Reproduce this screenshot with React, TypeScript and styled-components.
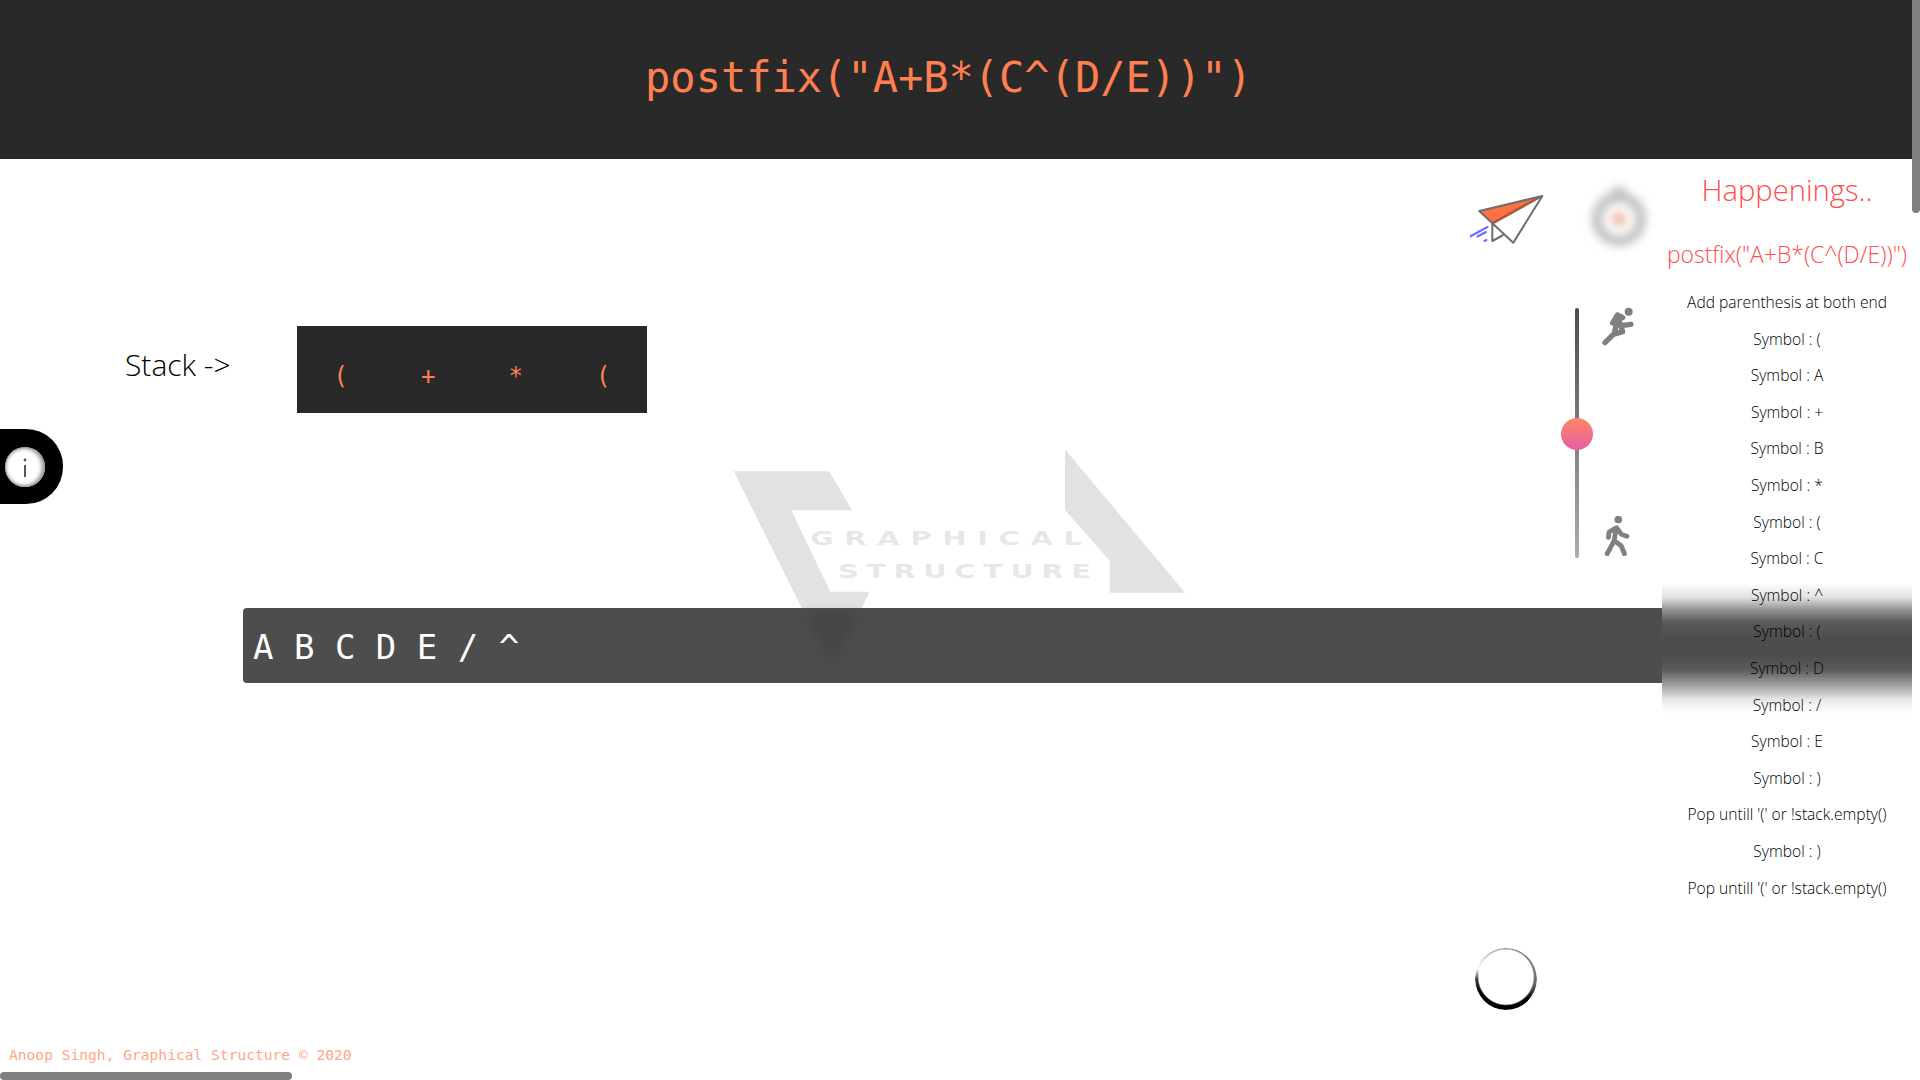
import React from 'react';
import styled, { createGlobalStyle } from 'styled-components';

const Global = createGlobalStyle`
  html, body { margin: 0; padding: 0; background: #fff; overflow: hidden; }
  * { box-sizing: border-box; }
`;

const Frame = styled.div`
  position: relative;
  width: 1920px;
  height: 1080px;
  padding-right: 8px;
  overflow: hidden;
  display: flex;
  flex-direction: column;
  background: #fff;
`;

const Header = styled.header`
  flex: 0 0 159px;
  height: 159px;
  background: #292929;
  color: #ff7f50;
  font: 400 42px/155px 'DejaVu Sans Mono', monospace;
  text-align: center;
  padding-right: 15px;
`;

const Body = styled.div`
  flex: 1;
  display: flex;
  min-height: 0;
`;

const Workspace = styled.main`
  flex: 1;
  min-width: 0;
  display: flex;
  flex-direction: column;
`;

const TopRow = styled.div`
  flex: 0 0 449px;
  display: flex;
  justify-content: space-between;
  align-items: flex-start;
`;

const StackRow = styled.section`
  display: flex;
  align-items: flex-start;
  margin: 167px 0 0 125px;
`;

const StackLabel = styled.div`
  width: 172px;
  font: 300 30px/77px 'Open Sans', sans-serif;
  color: #000;
`;

const StackBox = styled.div`
  display: flex;
  width: 350px;
  height: 87px;
  background: #292929;
`;

const StackItem = styled.span`
  flex: 1;
  text-align: center;
  color: #ff7f50;
  font: 400 24px/100px 'DejaVu Sans Mono', monospace;
`;

const Controls = styled.aside`
  width: 192px;
  padding-top: 31px;
  display: flex;
  flex-direction: column;
`;

const ControlTop = styled.div`
  display: flex;
  align-items: center;
  height: 62px;
`;

const Plane = styled.svg`
  width: 78px;
  height: 60px;
  flex: none;
`;

const Timer = styled.svg`
  width: 70px;
  height: 70px;
  margin: -8px 0 0 36px;
  flex: none;
  filter: blur(5px);
`;

const SpeedRow = styled.div`
  display: flex;
  margin-top: 56px;
  height: 250px;
  margin-left: 105px;
`;

const Track = styled.div`
  position: relative;
  width: 4px;
  height: 250px;
  border-radius: 2px;
  background: linear-gradient(to bottom, #4d4d4d, #adadad);
`;

const Thumb = styled.div`
  position: absolute;
  left: -14px;
  top: 110px;
  width: 32px;
  height: 32px;
  border-radius: 50%;
  background: linear-gradient(to bottom, #ff8566, #e55fa5);
`;

const SpeedIcons = styled.div`
  display: flex;
  flex-direction: column;
  justify-content: space-between;
  margin: -2px 0 0 22px;
  height: 250px;
`;

const SpeedIcon = styled.svg`
  display: block;
  width: 35px;
  height: 40px;
`;

const OutputBar = styled.div`
  flex: 0 0 75px;
  height: 75px;
  min-height: 0;
  margin-left: 243px;
  padding-left: 10px;
  border-radius: 4px 0 0 4px;
  background: #4d4d4d;
  color: #fff;
  font: 400 34px/78px 'DejaVu Sans Mono', monospace;
  white-space: pre;
  overflow: hidden;
`;

const BottomRow = styled.div`
  flex: 1;
  display: flex;
  flex-direction: column;
`;

const SpinnerSlot = styled.div`
  height: 327px;
  padding: 265px 0 0 1475px;
`;

const Spinner = styled.div`
  width: 62px;
  height: 62px;
  border-radius: 50%;
  background: conic-gradient(
    #8a8a8a 0deg,
    #7c7c7c 70deg,
    #666 100deg,
    #000 135deg,
    #000 240deg,
    #333 268deg,
    #fff 290deg,
    #cfcfcf 315deg,
    #8a8a8a 360deg
  );
  mask: radial-gradient(circle at 50% 47%, transparent 27px, #000 28.5px);
  filter: blur(0.5px);
`;

const Footer = styled.footer`
  margin: 35px 0 0 9px;
  color: #ffa588;
  font: 400 14.6px/20px 'DejaVu Sans Mono', monospace;
`;

const Panel = styled.aside`
  flex: 0 0 250px;
  width: 250px;
  position: relative;
  z-index: 3;
  text-align: center;
  background: linear-gradient(
    to bottom,
    #fff 0,
    #fff 424px,
    #e2e2e2 438px,
    #939393 451px,
    #5a5a5a 463px,
    #4d4d4d 480px,
    #4d4d4d 497px,
    #5c5c5c 511px,
    #a0a0a0 526px,
    #e4e4e4 540px,
    #f8f8f8 548px,
    #fff 555px,
    #fff 100%
  );
`;

const PanelTitle = styled.h2`
  margin: 9px 0 0;
  color: #ff4d4d;
  font: 300 29.2px/44px 'Open Sans', sans-serif;
`;

const PanelCode = styled.h3`
  margin: 23px 0 9px;
  color: #ff4d4d;
  font: 300 22.9px/40px 'Open Sans', sans-serif;
  white-space: nowrap;
`;

const LogLine = styled.div`
  color: #000;
  font: 300 15.6px/36.6px 'Open Sans', sans-serif;
  white-space: nowrap;
`;

const Watermark = styled.svg`
  position: absolute;
  left: 0;
  top: 0;
  width: 1920px;
  height: 1080px;
  z-index: 2;
  pointer-events: none;
`;

const InfoTab = styled.div`
  position: absolute;
  left: 0;
  top: 429px;
  width: 63px;
  height: 75px;
  padding-left: 5px;
  display: flex;
  align-items: center;
  background: #000;
  border-radius: 0 37px 37px 0;
  z-index: 4;
`;

const InfoDisc = styled.div`
  width: 40px;
  height: 40px;
  border-radius: 50%;
  background: #fff;
  box-shadow: inset -3px 0 4px #9a9aa5, inset 0 0 4px #555;
  display: flex;
  align-items: center;
  justify-content: center;
`;

const VThumb = styled.div`
  position: absolute;
  top: 0;
  right: 0;
  width: 8px;
  height: 213px;
  border-radius: 0 0 4px 4px;
  background: #808080;
  z-index: 5;
`;

const HThumb = styled.div`
  position: absolute;
  left: 0;
  bottom: 0;
  width: 292px;
  height: 8px;
  border-radius: 4px;
  background: #808080;
  z-index: 5;
`;

const LOG = [
  'Add parenthesis at both end',
  'Symbol : (', 'Symbol : A', 'Symbol : +', 'Symbol : B', 'Symbol : *', 'Symbol : (',
  'Symbol : C', 'Symbol : ^', 'Symbol : (', 'Symbol : D', 'Symbol : /', 'Symbol : E',
  'Symbol : )', "Pop untill '(' or !stack.empty()", 'Symbol : )', "Pop untill '(' or !stack.empty()",
];

const STACK = ['(', '+', '*', '('];

export default function App() {
  return (
    <Frame>
      <Global />
      <Header>postfix("A+B*(C^(D/E))")</Header>
      <Body>
        <Workspace>
          <TopRow>
            <StackRow>
              <StackLabel>Stack -&gt;</StackLabel>
              <StackBox>
                {STACK.map((s, i) => <StackItem key={i}>{s}</StackItem>)}
              </StackBox>
            </StackRow>
            <Controls>
              <ControlTop>
                <Plane viewBox="1470 190 78 60">
                  <polygon points="1479.3,210 1542.3,195 1492.3,222.3" fill="#ff7043" />
                  <polyline points="1492.3,222.3 1540,196" fill="none" stroke="#a8583c" strokeWidth="2.5" />
                  <path d="M1492.3 222.3 L1479.3 210 L1542.3 195 L1513.3 241.7 L1492.3 222.3 V240 L1503.3 234" fill="none" stroke="#6e6e6e" strokeWidth="2" strokeLinejoin="round" />
                  <path d="M1470 235.5 L1487.5 226 M1477.5 235.5 L1486 231 M1484.5 240 L1486.5 239" stroke="#6e6bff" strokeWidth="2" strokeLinecap="round" fill="none" />
                </Plane>
                <Timer viewBox="0 0 70 70">
                  <circle cx="35" cy="37" r="22" fill="none" stroke="#bdbdbd" strokeWidth="10" />
                  <rect x="29" y="5" width="12" height="9" fill="#bdbdbd" />
                  <circle cx="35" cy="37" r="7" fill="#e8b098" />
                </Timer>
              </ControlTop>
              <SpeedRow>
                <Track><Thumb /></Track>
                <SpeedIcons>
                  <SpeedIcon viewBox="185 45 105 120">
                    <circle cx="268" cy="62" r="12" fill="#808080" />
                    <path d="M197 155 L222 130 L250 122 L244 104 L275 100 M244 104 L234 72 L220 96 M234 72 L250 80 M236 78 L224 130" fill="none" stroke="#808080" strokeWidth="16" strokeLinecap="round" strokeLinejoin="round" />
                  </SpeedIcon>
                  <SpeedIcon viewBox="185 675 105 125">
                    <circle cx="237" cy="686" r="12" fill="#808080" />
                    <path d="M202 793 L224 752 L230 712 L208 725 L206 742 M232 712 L246 732 L264 738 M224 752 L246 768 L256 793" fill="none" stroke="#808080" strokeWidth="15" strokeLinecap="round" strokeLinejoin="round" />
                  </SpeedIcon>
                </SpeedIcons>
              </SpeedRow>
            </Controls>
          </TopRow>
          <OutputBar>A B C D E / ^</OutputBar>
          <BottomRow>
            <SpinnerSlot><Spinner /></SpinnerSlot>
            <Footer>Anoop Singh, Graphical Structure © 2020</Footer>
          </BottomRow>
        </Workspace>
        <Panel>
          <PanelTitle>Happenings..</PanelTitle>
          <PanelCode>postfix("A+B*(C^(D/E))")</PanelCode>
          {LOG.map((l, i) => <LogLine key={i}>{l}</LogLine>)}
        </Panel>
      </Body>
      <Watermark viewBox="0 0 1920 1080">
        <defs>
          <filter id="soft" x="-40%" y="-40%" width="180%" height="180%">
            <feGaussianBlur stdDeviation="7" />
          </filter>
        </defs>
        <g fill="#000" fillOpacity="0.115">
          <polygon points="733.7,471.3 829.3,471.3 852,510.3 791.3,510.3 830.3,591.7 869.7,591.7 861.7,608 801.7,608" />
          <polygon points="1065,449.3 1185,592.7 1109.7,592.7 1109.7,560.7 1065,510" />
          <polygon points="804,612 860,612 832,664" filter="url(#soft)" />
        </g>
        <g fill="#000" fillOpacity="0.115" fontFamily="'DejaVu Sans', sans-serif" fontWeight="700" fontSize="20">
          <text x="558.6" y="545" transform="scale(1.45 1)" textLength="187.6" lengthAdjust="spacing">GRAPHICAL</text>
          <text x="577.9" y="578" transform="scale(1.45 1)" textLength="174.5" lengthAdjust="spacing">STRUCTURE</text>
        </g>
      </Watermark>
      <InfoTab>
        <InfoDisc>
          <svg width="16" height="24" viewBox="0 0 16 24">
            <circle cx="8" cy="5" r="1.4" fill="#555" />
            <rect x="7" y="10" width="2" height="12" fill="#555" />
          </svg>
        </InfoDisc>
      </InfoTab>
      <VThumb />
      <HThumb />
    </Frame>
  );
}
